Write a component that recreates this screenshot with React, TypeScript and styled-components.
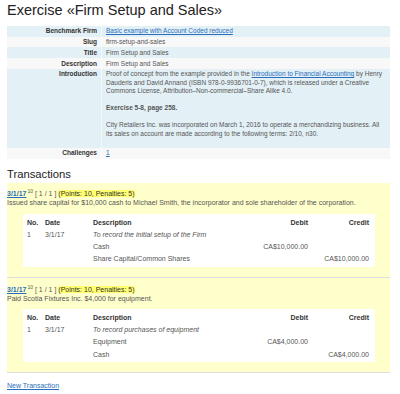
import styled, { createGlobalStyle } from 'styled-components'

const GlobalStyle = createGlobalStyle`
  body {
    margin: 0;
    background: #fff;
    font-family: "Liberation Sans", Arial, sans-serif;
    font-size: 6.5px;
    line-height: 8.5px;
    color: #555;
  }
`

const Page = styled.div`
  padding: 2px 10px 0 7px;
`

const Title = styled.h1`
  margin: 0;
  font-size: 14.5px;
  line-height: 16.7px;
  font-weight: normal;
  color: #222;
`

const Link = styled.a`
  color: #2a6ebb;
  text-decoration: underline;
  cursor: pointer;
`

// info table: one grid per row so the stripes are easy
const InfoTable = styled.div`
  margin-top: 7px;
`

const InfoRow = styled.div<{ $blue?: boolean }>`
  display: grid;
  grid-template-columns: 94px 1fr;
  background: ${(p) => (p.$blue ? '#e3f0f6' : '#f8f8f8')};
`

const Label = styled.div`
  padding: 1.2px 4px;
  text-align: right;
  font-weight: bold;
  color: #333;
`

const Value = styled.div`
  padding: 1.2px 4px;
  border-left: 1px solid rgba(255, 255, 255, 0.6);
`

const Para = styled.p`
  margin: 0 0 8.5px;
`

const Heading = styled.h2`
  margin: 9px 0 2px;
  font-size: 11.25px;
  line-height: 12.9px;
  font-weight: normal;
  color: #222;
`

const TxBox = styled.div`
  background: #ffffcc;
  padding: 6.5px 0 10px;
  border-bottom: 1px solid #ddd;
  font-size: 7px;
  line-height: 9px;
`

const TxDate = styled(Link)`
  font-weight: bold;
`

const Sup = styled.sup`
  font-size: 5px;
  line-height: 0;
  vertical-align: 3px;
  margin-left: 1px;
`

const Points = styled.span`
  background: #ffff70;
  color: #333;
`

const Entries = styled.div`
  margin: 6.75px 15px 0 16px;
  padding: 2px 2px 2px 0;
  background: #fff;
`

const EntryRow = styled.div<{ $head?: boolean }>`
  display: grid;
  grid-template-columns: 18px 48px 1fr 70px 61px;
  height: 12.25px;
  align-items: center;
  font-weight: ${(p) => (p.$head ? 'bold' : 'normal')};
  color: ${(p) => (p.$head ? '#333' : '#555')};
`

const Cell = styled.div<{ $right?: boolean; $italic?: boolean }>`
  padding: 0 4px;
  white-space: nowrap;
  text-align: ${(p) => (p.$right ? 'right' : 'left')};
  font-style: ${(p) => (p.$italic ? 'italic' : 'normal')};
`

const Footer = styled.div`
  margin-top: 9px;
  font-size: 7px;
`

type Line = { account: string; debit?: string; credit?: string }

type Transaction = {
  date: string
  text: string
  memo: string
  lines: Line[]
}

const transactions: Transaction[] = [
  {
    date: '3/1/17',
    text: 'Issued share capital for $10,000 cash to Michael Smith, the incorporator and sole shareholder of the corporation.',
    memo: 'To record the initial setup of the Firm',
    lines: [
      { account: 'Cash', debit: 'CA$10,000.00' },
      { account: 'Share Capital/Common Shares', credit: 'CA$10,000.00' },
    ],
  },
  {
    date: '3/1/17',
    text: 'Paid Scotia Fixtures Inc. $4,000 for equipment.',
    memo: 'To record purchases of equipment',
    lines: [
      { account: 'Equipment', debit: 'CA$4,000.00' },
      { account: 'Cash', credit: 'CA$4,000.00' },
    ],
  },
]

const TransactionBox = ({ tx }: { tx: Transaction }): JSX.Element => (
  <TxBox>
    <div>
      <TxDate>{tx.date}</TxDate>
      <Sup>10</Sup> [ 1 / 1 ] <Points>(Points: 10, Penalties: 5)</Points>
    </div>
    <div>{tx.text}</div>
    <Entries>
      <EntryRow $head>
        <Cell>No.</Cell>
        <Cell>Date</Cell>
        <Cell>Description</Cell>
        <Cell $right>Debit</Cell>
        <Cell $right>Credit</Cell>
      </EntryRow>
      <EntryRow>
        <Cell>1</Cell>
        <Cell>{tx.date}</Cell>
        <Cell $italic>{tx.memo}</Cell>
        <Cell />
        <Cell />
      </EntryRow>
      {tx.lines.map((l) => (
        <EntryRow key={l.account}>
          <Cell />
          <Cell />
          <Cell>{l.account}</Cell>
          <Cell $right>{l.debit}</Cell>
          <Cell $right>{l.credit}</Cell>
        </EntryRow>
      ))}
    </Entries>
  </TxBox>
)

const App = (): JSX.Element => (
  <Page>
    <GlobalStyle />
    <Title>Exercise «Firm Setup and Sales»</Title>
    <InfoTable>
      <InfoRow $blue>
        <Label>Benchmark Firm</Label>
        <Value>
          <Link>Basic example with Account Coded reduced</Link>
        </Value>
      </InfoRow>
      <InfoRow>
        <Label>Slug</Label>
        <Value>firm-setup-and-sales</Value>
      </InfoRow>
      <InfoRow $blue>
        <Label>Title</Label>
        <Value>Firm Setup and Sales</Value>
      </InfoRow>
      <InfoRow>
        <Label>Description</Label>
        <Value>Firm Setup and Sales</Value>
      </InfoRow>
      <InfoRow $blue>
        <Label>Introduction</Label>
        <Value>
          <Para>
            Proof of concept from the example provided in the <Link>Introduction to Financial Accounting</Link> by
            Henry Dauderis and David Annand (ISBN 978-0-9936701-0-7), which is released under a Creative Commons
            License, Attribution–Non-commercial–Share Alike 4.0.
          </Para>
          <Para>
            <b>Exercise 5-8, page 258.</b>
          </Para>
          <Para>
            City Retailers Inc. was incorporated on March 1, 2016 to operate a merchandizing business. All its sales
            on account are made according to the following terms: 2/10, n30.
          </Para>
        </Value>
      </InfoRow>
      <InfoRow>
        <Label>Challenges</Label>
        <Value>
          <Link>1</Link>
        </Value>
      </InfoRow>
    </InfoTable>
    <Heading>Transactions</Heading>
    {transactions.map((tx, i) => (
      <TransactionBox key={i} tx={tx} />
    ))}
    <Footer>
      <Link>New Transaction</Link>
    </Footer>
  </Page>
)

export default App
